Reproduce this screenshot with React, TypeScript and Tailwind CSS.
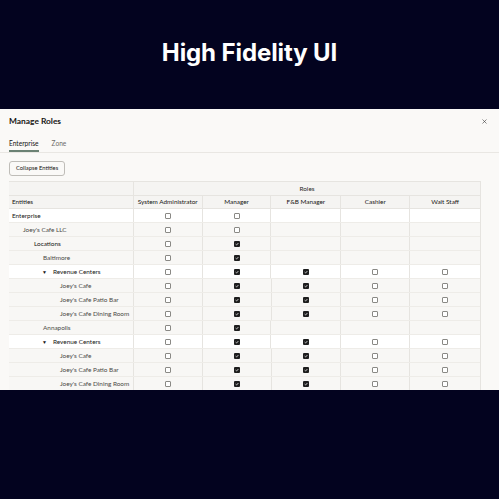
import { X } from "lucide-react"

type Row = {
  label: string
  indent: number
  strong?: boolean
  caret?: boolean
  white?: boolean
  vals: (0 | 1 | null)[]
}

const full = (m: 0 | 1): (0 | 1 | null)[] => [0, m, null, null, null]
const rc: (0 | 1 | null)[] = [0, 1, 1, 0, 0]

const rows: Row[] = [
  { label: "Enterprise", indent: 3, strong: true, white: true, vals: full(0) },
  { label: "Joey's Cafe LLC", indent: 14, vals: full(0) },
  { label: "Locations", indent: 25, strong: true, vals: full(1) },
  { label: "Baltimore", indent: 34, vals: full(1) },
  { label: "Revenue Centers", indent: 33, strong: true, caret: true, white: true, vals: rc },
  { label: "Joey's Cafe", indent: 51, vals: rc },
  { label: "Joey's Cafe Patio Bar", indent: 51, vals: rc },
  { label: "Joey's Cafe Dining Room", indent: 51, vals: rc },
  { label: "Annapolis", indent: 34, vals: full(1) },
  { label: "Revenue Centers", indent: 33, strong: true, caret: true, white: true, vals: rc },
  { label: "Joey's Cafe", indent: 51, vals: rc },
  { label: "Joey's Cafe Patio Bar", indent: 51, vals: rc },
  { label: "Joey's Cafe Dining Room", indent: 51, vals: rc },
]

const roles = ["System Administrator", "Manager", "F&B Manager", "Cashier", "Wait Staff"]
const widths = ["w-[69px]", "w-[69px]", "w-[70px]", "w-[69px]", "w-[70px]"]

const Box = ({ on }: { on: 0 | 1 }) =>
  on ? (
    <span className="flex items-center justify-center w-[6px] h-[6px] rounded-[1px] bg-[#1e1e1e]">
      <svg width="4" height="4" viewBox="0 0 4 4">
        <path d="M0.6 2.1 L1.6 3 L3.4 1" stroke="#fff" strokeWidth="0.7" fill="none" />
      </svg>
    </span>
  ) : (
    <span className="block w-[6px] h-[6px] rounded-[1px] border border-[#8a8985] bg-white" />
  )

export default function App() {
  return (
    <div className="w-[499px] h-[499px] bg-[#03031f] flex flex-col overflow-hidden" style={{ fontFamily: "Lato, 'Noto Sans', sans-serif" }}>
      <div className="h-[109px] shrink-0 flex items-center justify-center pb-[4px]">
        <h1 className="text-white font-bold text-[24px] tracking-[-0.1px]" style={{ fontFamily: "Inter, sans-serif" }}>
          High Fidelity UI
        </h1>
      </div>

      <div className="h-[281px] shrink-0 flex flex-col bg-[#faf9f7] overflow-hidden text-[#161513]">
        <div className="flex items-center justify-between pl-[9px] pr-[11px] h-[24px] shrink-0">
          <span className="font-bold text-[8.4px] leading-[10px]">Manage Roles</span>
          <X size={7} strokeWidth={2} color="#333" />
        </div>

        <div className="flex gap-[13px] pl-[9px] border-b border-[#e9e7e3] h-[20px] shrink-0 items-end">
          <span className="text-[6.6px] text-[#161513] pb-[3px] border-b-[2px] border-[#6b8274] leading-[8px]">Enterprise</span>
          <span className="text-[6.6px] text-[#6f6d69] pb-[3px] border-b-[2px] border-transparent leading-[8px]">Zone</span>
        </div>

        <div className="flex pl-[9px] mt-[8px] shrink-0">
          <span className="flex items-center h-[15px] px-[6px] border border-[#bfbdb8] rounded-[3px] bg-[#faf9f7] text-[5.8px] text-[#161513]">
            Collapse Entities
          </span>
        </div>

        <div className="ml-[9px] mt-[5px] w-[472px] shrink-0 border-t border-r border-[#e6e4e0] text-[6.4px] leading-[8px]">
          <div className="flex h-[14px] bg-[#f5f4f2] border-b border-[#e6e4e0]">
            <div className="w-[125px] border-r border-[#e6e4e0]" />
            <div className="flex-1 flex items-center justify-center text-[#2a2926]">Roles</div>
          </div>
          <div className="flex h-[13px] bg-[#f5f4f2] border-b border-[#e6e4e0]">
            <div className="w-[125px] border-r border-[#e6e4e0] flex items-center pl-[3px] text-[#161513]">Entities</div>
            {roles.map((r, i) => (
              <div key={r} className={`${widths[i]} ${i < 4 ? "border-r border-[#e6e4e0]" : ""} flex items-center justify-center text-[#161513]`}>
                {r}
              </div>
            ))}
          </div>
          {rows.map((row, ri) => (
            <div key={ri} className={`flex h-[14px] border-b border-[#eeece8] ${row.white ? "bg-white" : "bg-[#f8f7f5]"}`}>
              <div
                className={`w-[125px] border-r border-[#e6e4e0] flex items-center ${row.strong ? "text-[#161513]" : "text-[#4a4946]"}`}
                style={{ paddingLeft: row.indent }}
              >
                {row.caret && <span className="text-[5px] mr-[6px]">▼</span>}
                {row.label}
              </div>
              {row.vals.map((v, i) => (
                <div key={i} className={`${widths[i]} ${i < 4 ? "border-r border-[#e6e4e0]" : ""} flex items-center justify-center`}>
                  {v !== null && <Box on={v} />}
                </div>
              ))}
            </div>
          ))}
        </div>
      </div>
    </div>
  )
}
